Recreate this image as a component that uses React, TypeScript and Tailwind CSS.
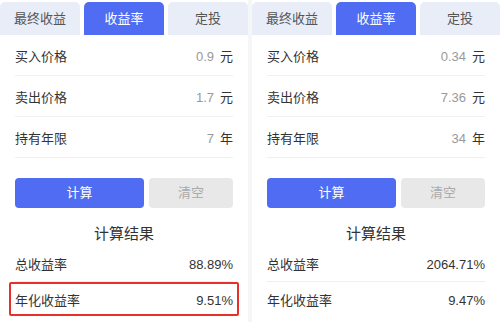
import React from "react"

type Panel = {
  buy: string
  sell: string
  years: string
  total: string
  annual: string
  marked: boolean
}

const panels: Panel[] = [
  { buy: "0.9", sell: "1.7", years: "7", total: "88.89%", annual: "9.51%", marked: true },
  { buy: "0.34", sell: "7.36", years: "34", total: "2064.71%", annual: "9.47%", marked: false },
]

function InputRow({ label, value, unit }: { label: string; value: string; unit: string }) {
  return (
    <div className="flex h-[41px] items-center justify-between border-b border-[#f0f0f0] pt-[4px]">
      <span className="text-[13px] text-[#333]">{label}</span>
      <span className="flex items-center gap-[6px] text-[13px]">
        <span className="text-[#999]">{value}</span>
        <span className="text-[#333]">{unit}</span>
      </span>
    </div>
  )
}

function Calculator({ p }: { p: Panel }) {
  return (
    <div className="flex w-[248px] flex-col">
      <div className="flex h-[35px] gap-[4px] bg-white pt-[2px]">
        <div className="flex flex-1 items-center justify-center rounded-t-[5px] bg-[#e9edf7] text-[13px] text-[#555]">
          最终收益
        </div>
        <div className="flex flex-1 items-center justify-center rounded-t-[5px] bg-[#4f6cf2] text-[13px] text-white">
          收益率
        </div>
        <div className="flex flex-1 items-center justify-center rounded-t-[5px] bg-[#e9edf7] text-[13px] text-[#555]">
          定投
        </div>
      </div>
      <div className="flex flex-1 flex-col bg-white px-[15px]">
        <InputRow label="买入价格" value={p.buy} unit="元" />
        <InputRow label="卖出价格" value={p.sell} unit="元" />
        <InputRow label="持有年限" value={p.years} unit="年" />
        <div className="mt-[20px] flex h-[30px] gap-[5px]">
          <button className="flex w-[129px] items-center justify-center rounded-[4px] bg-[#4f6cf2] text-[13px] text-white">
            计算
          </button>
          <button className="flex flex-1 items-center justify-center rounded-[4px] bg-[#e8e8e8] text-[13px] text-[#aaa]">
            清空
          </button>
        </div>
        <div className="mt-[15px] flex h-[22px] items-center justify-center text-[15px] text-[#333]">
          计算结果
        </div>
        <div className="flex h-[37px] items-center justify-between border-b border-[#f0f0f0] pt-[3px] text-[13px] text-[#333]">
          <span>总收益率</span>
          <span>{p.total}</span>
        </div>
        <div
          className={
            p.marked
              ? "-mx-[6px] flex h-[34px] items-center justify-between rounded-[2px] border-2 border-[#e8302a] px-[4px] pt-[3px] text-[13px] text-[#333]"
              : "flex h-[34px] items-center justify-between pt-[3px] text-[13px] text-[#333]"
          }
        >
          <span>年化收益率</span>
          <span>{p.annual}</span>
        </div>
      </div>
    </div>
  )
}

export default function App() {
  return (
    <div
      className="flex h-[322px] w-[500px] gap-[4px] overflow-hidden bg-[#f5f6f8]"
      style={{ fontFamily: '"Liberation Sans", "Noto Sans CJK SC", sans-serif' }}
    >
      {panels.map((p, i) => (
        <Calculator key={i} p={p} />
      ))}
    </div>
  )
}
